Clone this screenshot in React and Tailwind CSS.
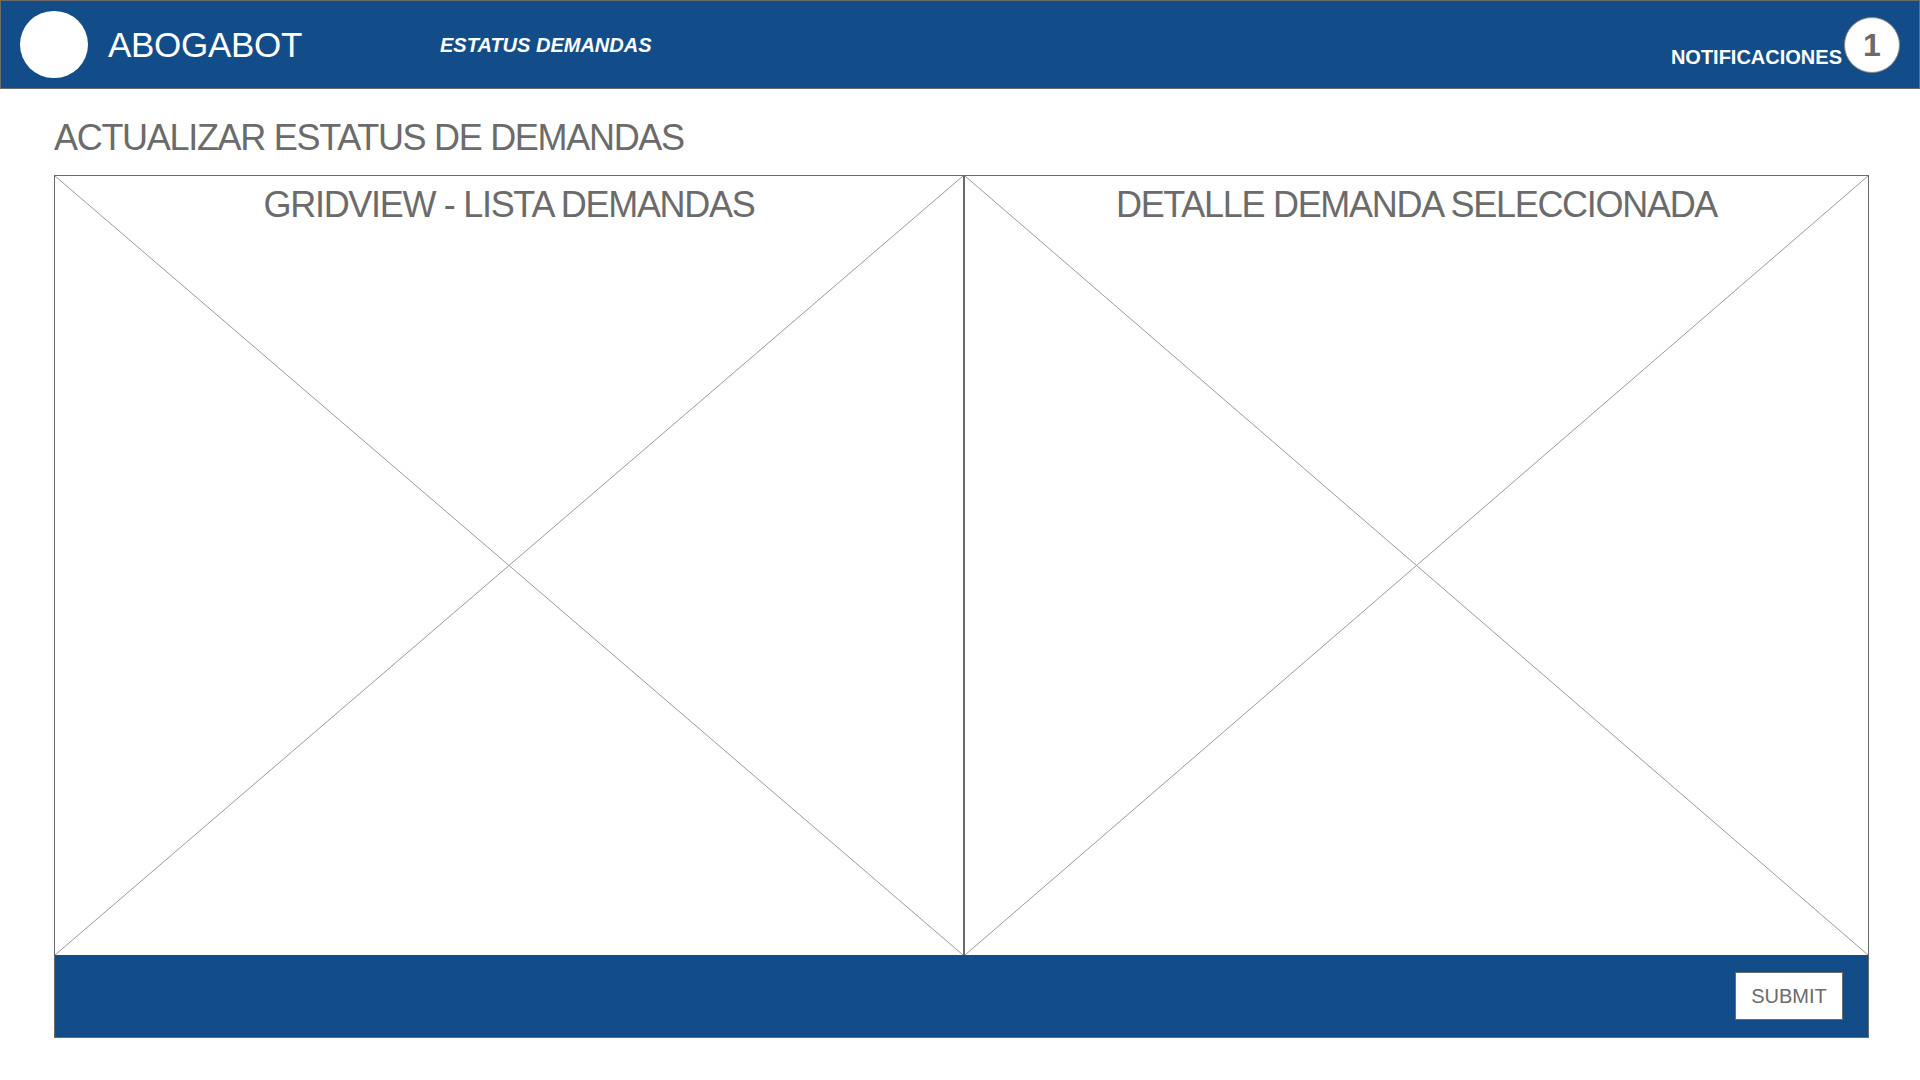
import React from "react";

const font = { fontFamily: '"Liberation Sans", Arial, Helvetica, sans-serif' };

const Crossed = ({ title, className }) => (
  <div className={`relative h-full ${className}`}>
    <svg
      className="absolute inset-0 h-full w-full"
      viewBox="0 0 100 100"
      preserveAspectRatio="none"
    >
      <line x1="0" y1="0" x2="100" y2="100" stroke="#9a9a9a" strokeWidth="1" vectorEffect="non-scaling-stroke" />
      <line x1="100" y1="0" x2="0" y2="100" stroke="#9a9a9a" strokeWidth="1" vectorEffect="non-scaling-stroke" />
    </svg>
    <div className="relative pt-[8px] text-center text-[36px] leading-[42px] tracking-[-1.3px] text-[#6b6b6b]">
      {title}
    </div>
  </div>
);

export default function App() {
  return (
    <div className="min-h-screen w-[1920px] bg-white" style={font}>
      <header className="flex h-[89px] items-center border border-[#6b6b6b] bg-[#124d89] pl-[19px] pr-[19px]">
        <div className="h-[67px] w-[68px] rounded-full bg-white" />
        <div className="ml-[20px] text-[35px] leading-none tracking-[-0.3px] text-white">ABOGABOT</div>
        <div className="ml-[138px] text-[20px] font-bold italic leading-none text-white">
          ESTATUS DEMANDAS
        </div>
        <div className="ml-auto flex items-center">
          <span className="mt-[24px] text-[20px] font-bold leading-none text-white">
            NOTIFICACIONES
          </span>
          <div className="ml-[2px] flex h-[56px] w-[56px] items-center justify-center rounded-full border border-[#8a8a8a] bg-white text-[32px] font-bold text-[#6b6b6b]">
            1
          </div>
        </div>
      </header>

      <h1 className="ml-[54px] mt-[28px] text-[36px] leading-[42px] tracking-[-1.3px] text-[#6b6b6b]">
        ACTUALIZAR ESTATUS DE DEMANDAS
      </h1>

      <div className="ml-[54px] mt-[16px] w-[1815px] border border-[#6b6b6b]">
        <div className="flex h-[779px]">
          <Crossed title="GRIDVIEW - LISTA DEMANDAS" className="w-[910px] border-r-2 border-[#6b6b6b]" />
          <Crossed title="DETALLE DEMANDA SELECCIONADA" className="flex-1" />
        </div>
        <div className="flex h-[82px] items-center justify-end bg-[#124d89] pr-[25px]">
          <button className="h-[48px] w-[108px] border border-[#6b6b6b] bg-white text-[20px] text-[#6b6b6b]">
            SUBMIT
          </button>
        </div>
      </div>
    </div>
  );
}
